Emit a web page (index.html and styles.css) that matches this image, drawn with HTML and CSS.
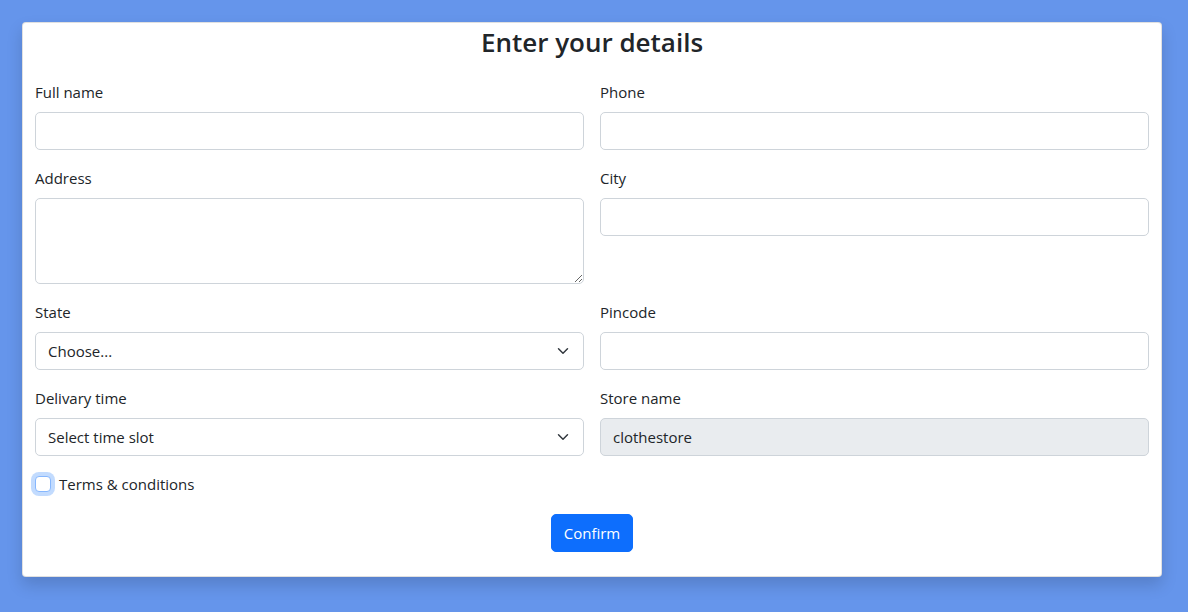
FILE: index.html
```html
<!DOCTYPE html>
<html lang="en">
<head>
<meta charset="utf-8">
<title>Enter your details</title>
<link rel="stylesheet" href="styles.css">
</head>
<body>
<div class="card">
  <h3 class="title">Enter your details</h3>
  <form class="form-grid">
    <div class="field">
      <label class="form-label" for="fullname">Full name</label>
      <input class="form-control" id="fullname" type="text">
    </div>
    <div class="field">
      <label class="form-label" for="phone">Phone</label>
      <input class="form-control" id="phone" type="text">
    </div>
    <div class="field">
      <label class="form-label" for="address">Address</label>
      <textarea class="form-control textarea" id="address" rows="3"></textarea>
    </div>
    <div class="field">
      <label class="form-label" for="city">City</label>
      <input class="form-control" id="city" type="text">
    </div>
    <div class="field">
      <label class="form-label" for="state">State</label>
      <select class="form-select" id="state">
        <option>Choose...</option>
      </select>
    </div>
    <div class="field">
      <label class="form-label" for="pincode">Pincode</label>
      <input class="form-control" id="pincode" type="text">
    </div>
    <div class="field">
      <label class="form-label" for="slot">Delivary time</label>
      <select class="form-select" id="slot">
        <option>Select time slot</option>
      </select>
    </div>
    <div class="field">
      <label class="form-label" for="store">Store name</label>
      <input class="form-control" id="store" type="text" value="clothestore" disabled>
    </div>
    <div class="check-row">
      <input class="check-input" id="terms" type="checkbox">
      <label class="check-label" for="terms">Terms &amp; conditions</label>
    </div>
    <div class="actions">
      <button class="btn-primary" type="button">Confirm</button>
    </div>
  </form>
</div>
</body>
</html>
```

FILE: styles.css
```css
* { box-sizing: border-box; }

html, body {
  margin: 0;
  padding: 0;
}

body {
  background: #6595eb;
  font-family: "Open Sans", "Noto Sans", "Liberation Sans", sans-serif;
  font-size: 15px;
  line-height: 24px;
  color: #212529;
  padding: 22px 0 0 22px;
  height: 612px;
}

.card {
  width: 1140px;
  background: #fff;
  border: 1px solid rgba(0,0,0,0.12);
  border-radius: 4px;
  box-shadow: 0 8px 16px rgba(0,0,0,0.15);
  padding: 2px 12px 24px 12px;
}

.title {
  margin: 0;
  font-size: 26px;
  line-height: 34px;
  font-weight: 600;
  text-align: center;
}

.form-grid {
  margin-top: 21px;
  display: grid;
  grid-template-columns: 1fr 1fr;
  column-gap: 16px;
  row-gap: 16px;
}

.field {
  display: flex;
  flex-direction: column;
}

.form-label {
  display: block;
  margin-bottom: 8px;
  line-height: 24px;
}

.form-control,
.form-select {
  display: block;
  width: 100%;
  height: 38px;
  padding: 6px 12px;
  font-family: inherit;
  font-size: 15px;
  line-height: 24px;
  color: #212529;
  background: #fff;
  border: 1px solid #ced4da;
  border-radius: 5px;
  margin: 0;
  outline: none;
}

.textarea {
  height: 86px;
  resize: vertical;
}

.form-control:disabled {
  background: #e9ecef;
  color: #212529;
  opacity: 1;
}

.form-select {
  -webkit-appearance: none;
  appearance: none;
  padding-right: 36px;
  background-image: url("data:image/svg+xml,%3csvg xmlns='http://www.w3.org/2000/svg' viewBox='0 0 16 16'%3e%3cpath fill='none' stroke='%23343a40' stroke-linecap='round' stroke-linejoin='round' stroke-width='2' d='m2 5 6 6 6-6'/%3e%3c/svg%3e");
  background-repeat: no-repeat;
  background-position: right 12px center;
  background-size: 16px 12px;
}

.check-row {
  grid-column: 1 / -1;
  display: flex;
  align-items: center;
  height: 24px;
}

.check-input {
  -webkit-appearance: none;
  appearance: none;
  width: 16px;
  height: 16px;
  margin: 0 8px 0 0;
  border: 1px solid #86b7fe;
  border-radius: 4px;
  background: #fff;
  box-shadow: 0 0 0 4px rgba(13,110,253,0.25);
}

.check-label {
  line-height: 24px;
}

.actions {
  grid-column: 1 / -1;
  display: flex;
  justify-content: center;
  margin-top: 2px;
}

.btn-primary {
  font-family: inherit;
  font-size: 15px;
  line-height: 24px;
  height: 38px;
  padding: 6px 12px;
  color: #fff;
  background: #0d6efd;
  border: 1px solid #0d6efd;
  border-radius: 5px;
}
```
